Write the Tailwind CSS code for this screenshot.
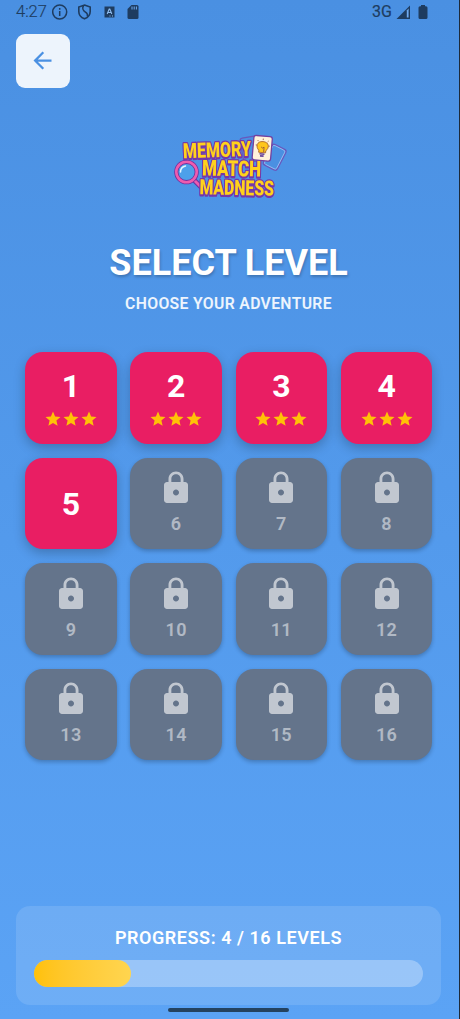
<!DOCTYPE html>
<html lang="en">
<head>
<meta charset="utf-8">
<title>Select Level</title>
<script src="https://cdn.jsdelivr.net/npm/@tailwindcss/browser@4"></script>
</head>
<body class="bg-[#1d2a3a] font-['Roboto',sans-serif]">
<svg class="hidden">
  <symbol id="star" viewBox="0 0 24 24"><path d="M12 17.27 18.18 21l-1.64-7.03L22 9.24l-7.19-.61L12 2 9.19 8.63 2 9.24l5.46 4.73L5.82 21z"/></symbol>
  <symbol id="lock" viewBox="0 0 24 24"><path d="M18 8h-1V6c0-2.76-2.24-5-5-5S7 3.24 7 6v2H6c-1.1 0-2 .9-2 2v10c0 1.100.9 2 2 2h12c1.100 0 2-.9 2-2V10c0-1.100-.9-2-2-2zm-6 9c-1.100 0-2-.9-2-2s.9-2 2-2 2 .9 2 2-.9 2-2 2zm3.100-9H8.900V6c0-1.710 1.390-3.100 3.100-3.100s3.100 1.390 3.100 3.100v2z"/></symbol>
</svg>
<div class="relative flex h-[1019px] w-[459px] flex-col overflow-hidden bg-linear-to-b from-[#4a90e2] to-[#5ba3f5]">
  <header class="flex h-[34px] items-start justify-between pl-4 pr-[31px] text-[#1e3c60]">
    <div class="flex h-[23px] items-center">
      <span class="w-[36px] text-[16.500px] leading-[23px] whitespace-nowrap font-light [-webkit-text-stroke:0.15px_currentColor]">4:27</span>
      <svg class="h-4 w-4" viewBox="0 0 16 16" fill="none" stroke="currentColor" stroke-width="1.500"><circle cx="7.700" cy="8" r="7"/><path d="M7.700 7v5M7.700 4v1.700"/></svg>
      <svg class="ml-[8px] h-4 w-4" viewBox="0 0 16 16" fill="none" stroke="currentColor" stroke-width="1.600"><path d="M8.500 1 14.200 3v4.500c0 3.500-2.300 6-5.700 7.300C5.100 13.500 2.800 11 2.800 7.500V3z"/><path d="M7.500 1.500C5 6 8.500 7.500 10.500 9c1.300 1 1.200 2.300.8 3.500"/></svg>
      <svg class="ml-[12px] h-4 w-[11px]" viewBox="0 0 11 16"><path fill="currentColor" d="M.5 2.500h10v11H.5z"/><path fill="none" stroke="#8fbdf0" stroke-width="1.100" d="m3.200 10 2-5h.6l2 5M4 8.500h3M5.500 12h1M8 12h1"/></svg>
      <svg class="ml-[12px] h-4 w-3" viewBox="0 0 12 16"><path fill="currentColor" d="M4.500 1H10q1.500 0 1.500 1.500v11Q11.500 15 10 15H2Q.5 15 .5 13.500V5z"/><path stroke="#6faaf0" d="M5 2.500v3M7.200 2.500v3M9.400 2.500v3"/></svg>
    </div>
    <div class="flex h-[23px] items-center">
      <span class="w-[24px] pl-px text-[16px] leading-[23px] [-webkit-text-stroke:0.2px_currentColor]">3G</span>
      <svg class="h-4 w-4" viewBox="0 0 16 16"><path fill="currentColor" d="M15 1.500V15H1.500z"/><path fill="#6faaf0" d="M11.800 6.500 13.600 4.500v9h-1.800z"/></svg>
      <svg class="ml-[7px] h-4 w-[10px]" viewBox="0 0 10 16"><path fill="currentColor" d="M3 1h4v1.300h1Q9.500 2.300 9.500 3.800v9.700Q9.500 15 8 15H2Q.5 15 .5 13.500V3.800Q.5 2.300 2 2.300h1z"/></svg>
    </div>
  </header>
  <button class="ml-4 flex h-[54px] w-[54px] shrink-0 items-center justify-center rounded-[9px] bg-[#edf4fc] pr-px pb-px text-[#4a90e2]">
    <svg class="h-[27px] w-[27px]" viewBox="0 0 24 24" fill="currentColor"><path d="M20 11H7.830l5.590-5.590L12 4l-8 8 8 8 1.410-1.410L7.830 13H20z"/></svg>
  </button>
  <svg class="mt-[42px] ml-[170px] h-[74px] w-[120px] shrink-0 overflow-visible" viewBox="170 130 120 74" font-family="Roboto, sans-serif" font-weight="900">
    <g fill="#4a90e2" stroke="#6858bd" stroke-width="1.400"><rect x="242" y="137" width="17" height="25" rx="2.500" transform="rotate(-10 250 151)"/><rect x="266.500" y="145.500" width="15.500" height="23" rx="2.500" transform="rotate(27 274 158)"/></g>
    <rect x="267.500" y="146.500" width="13.500" height="21" rx="2" transform="rotate(27 274 158)" fill="none" stroke="#a8c8f5" stroke-width=".7"/>
    <path d="m194 180 8 8" stroke="#6c2f9e" stroke-width="5" stroke-linecap="round"/>
    <path d="m194 180 7 7" stroke="#ee5cae" stroke-width="2.800"/>
    <circle cx="186.500" cy="172" r="10.200" fill="#4da0ea" stroke="#70309d" stroke-width="4.200"/>
    <circle cx="186.500" cy="172" r="10.200" fill="none" stroke="#ee5cae" stroke-width="2.600"/>
    <path d="M180.500 172q0-5 5-6" fill="none" stroke="#e4f6ff" stroke-width="1.500" stroke-linecap="round"/>
    <g fill="#ffd21c" stroke="#7638a8" stroke-width="2.600" stroke-linejoin="round" paint-order="stroke" class="[filter:drop-shadow(0.8px_1px_0_#7638a8)]">
      <text x="183" y="157" font-size="21" textLength="68" lengthAdjust="spacingAndGlyphs" transform="rotate(-2 217 150)">MEMORY</text>
      <text x="202" y="176" font-size="22" textLength="59" lengthAdjust="spacingAndGlyphs" transform="rotate(1 230 170)">MATCH</text>
      <text x="199.500" y="195" font-size="21" textLength="74.500" lengthAdjust="spacingAndGlyphs" transform="rotate(1 236 188)">MADNESS</text>
    </g>
    <g transform="rotate(5 262 148)">
      <rect x="253" y="136" width="18.500" height="24.500" rx="2.500" fill="#fff2db" stroke="#73409f" stroke-width="1.300"/>
      <path d="M262.500 141.500c-6.500 0-7 6-3.500 9v2h7v-2c3.500-3 3-9-3.500-9z" fill="#ffc61a" stroke="#a65d28" stroke-width=".8"/>
      <path d="M260 154h5M260.700 156h3.600" stroke="#68449a" stroke-width="1.600"/>
      <path d="m262.500 138.500v1.500M257 140.500l1 1M268 140.500l-1 1M255.500 145.500h1.300M268.300 145.500h1.300M261 147l1.500 1 1.500-1v5" stroke="#925237" stroke-width=".8" fill="none"/>
    </g>
  </svg>
  <h1 class="mt-[37px] pr-[2px] text-center text-[36px] leading-[44px] font-bold text-white [text-shadow:1px_2px_3px_rgba(0,0,0,0.22)]">SELECT LEVEL</h1>
  <p class="mt-[7.500px] pr-[2px] text-center text-[15.750px] leading-[22px] font-semibold tracking-[0.340px] text-white/90">CHOOSE YOUR ADVENTURE</p>
  <main id="levels" class="mt-[37.900px] ml-[25.200px] grid w-[407.200px] grid-cols-4 gap-x-[13.600px] gap-y-[13.900px]"></main>
  <section class="mt-auto mb-[14px] ml-4 h-[99px] w-[425px] shrink-0 rounded-[14px] bg-white/12 px-[18px] pt-[20px]">
    <p class="text-center text-[18px] leading-[23px] font-semibold tracking-[0.560px] text-white">PROGRESS: 4 / 16 LEVELS</p>
    <div class="mt-[11px] h-[27px] rounded-full bg-white/30"><div class="h-full w-1/4 rounded-full bg-linear-to-r from-[#ffc107] to-[#ffd54f]"></div></div>
  </section>
  <div class="absolute bottom-[7px] left-[168px] h-1 w-[121px] rounded-full bg-[#24425f]"></div>
</div>
<script>
const star = '<svg class="h-[18px] w-[18px]"><use href="#star"/></svg>';
document.getElementById('levels').innerHTML = Array.from({length: 16}, (_, i) => {
  const n = i + 1;
  if (n < 5) return `<div class="flex h-[91.600px] flex-col items-center rounded-[18px] bg-[#e91e63] pt-[15px] shadow-[0_4px_12px_rgba(0,0,0,0.24)]"><span class="text-[32px] leading-[38px] font-bold text-white">${n}</span><div class="mt-[5px] flex fill-[#ffc107]">${star.repeat(3)}</div></div>`;
  if (n === 5) return `<div class="flex h-[91.600px] items-center justify-center rounded-[18px] bg-[#e91e63] shadow-[0_4px_12px_rgba(0,0,0,0.24)]"><span class="text-[32px] leading-[38px] font-bold text-white">${n}</span></div>`;
  return `<div class="flex h-[91.600px] flex-col items-center rounded-[18px] bg-[#64748b] pt-[12.400px] shadow-[0_2px_4px_rgba(0,0,0,0.24)]"><svg class="h-9 w-9 fill-white/60"><use href="#lock"/></svg><span class="mt-[7px] text-[18px] leading-[22px] font-semibold tracking-[0.400px] text-white/50">${n}</span></div>`;
}).join('');
</script>
</body>
</html>
